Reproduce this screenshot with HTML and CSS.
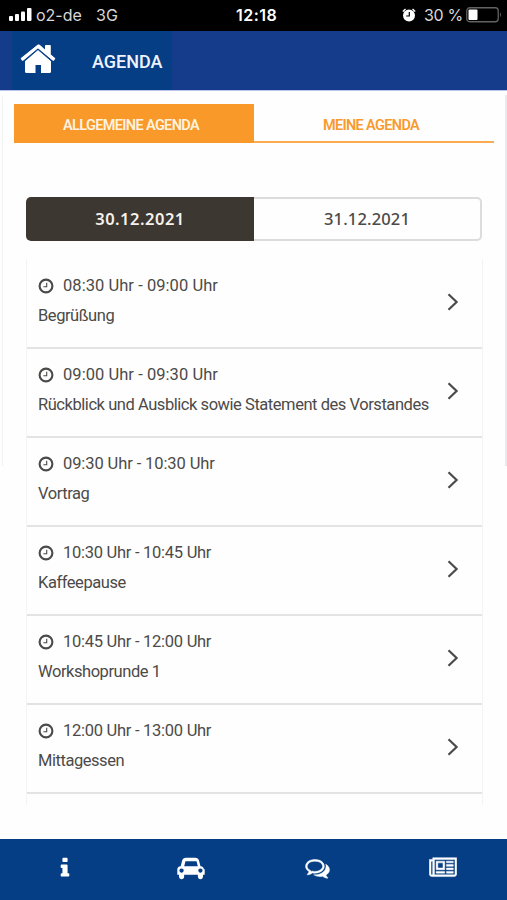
FILE: index.html
```html
<!DOCTYPE html>
<html lang="de">
<head>
    <meta charset="UTF-8">
    <meta name="viewport" content="width=device-width, initial-scale=1.0">
    <title>Agenda</title>
    <link rel="stylesheet" href="styles.css">
</head>
<body>
    <svg class="defs" width="0" height="0">
        <symbol id="clock" viewBox="0 0 16 16">
            <circle cx="8" cy="8" r="6.4" fill="none" stroke="currentColor" stroke-width="2.1"/>
            <path d="M8.7 4.8v4H5.4" fill="none" stroke="currentColor" stroke-width="1.1"/>
        </symbol>
        <symbol id="arrow" viewBox="0 0 12 18">
            <path d="M1.500 1.200L9.600 9l-8.100 7.800" fill="none" stroke="currentColor" stroke-width="2.2"/>
        </symbol>
    </svg>
    <div class="status">
        <svg class="signal" width="24" height="14" viewBox="0 0 24 14">
            <rect x="0" y="8" width="4" height="5" rx="1"/>
            <rect x="6" y="6" width="4" height="7" rx="1"/>
            <rect x="12" y="3.5" width="4" height="9.5" rx="1"/>
            <rect x="18" y="0" width="4.5" height="13" rx="1"/>
        </svg>
        <span class="carrier">o2-de</span>
        <span class="net">3G</span>
        <span class="clock">12:18</span>
        <svg class="alarm" width="14" height="14" viewBox="0 0 14 14">
            <circle cx="7" cy="7.5" r="6"/>
            <path d="M.8 3.4L3.5.9M13.2 3.4L10.5.9" stroke="#fff" stroke-width="1.4"/>
            <path d="M7.3 4v4H4.2" fill="none" stroke="#000" stroke-width="1.2"/>
        </svg>
        <span class="percent">30 %</span>
        <svg class="battery" width="37" height="16" viewBox="0 0 37 16">
            <rect x=".75" y=".75" width="31.5" height="14" rx="3" fill="none" stroke="#626262" stroke-width="1.3"/>
            <rect x="2.5" y="2.5" width="9" height="10.5" rx="1"/>
            <path d="M34 5.2q2 2.5 0 5z" fill="#626262"/>
        </svg>
    </div>
    <header>
        <div class="title">
            <svg class="home" width="36" height="30" viewBox="0 0 36 30">
                <path d="M18 5.8L31 17v10.5q0 1.5-1.5 1.5H21v-8h-5.5v8H6.5q-1.5 0-1.5-1.5V17z"/>
                <path d="M17.9.8q.9-.6 1.8 0L25 5.4V1.8q0-.8.8-.8H30q.8 0 .8.8v8.6l4.2 3.7q.6.6 0 1.2l-1.1 1.3q-.6.6-1.2 0L18 3.9 3.3 16.6q-.6.6-1.2 0L1 15.3q-.6-.6 0-1.2z"/>
                <path d="M2.500 15.200L18 2.400l15.500 12.800" fill="none" stroke="#fff" stroke-width="2.8"/>
                <path d="M4 17.500L18 5.600l14 11.900" fill="none" stroke="#063e85" stroke-width=".7"/>
            </svg>
            <h1>AGENDA</h1>
        </div>
    </header>
    <main>
        <div class="edge"></div>
        <nav class="tabs">
            <a class="active"><span>ALLGEMEINE AGENDA</span></a>
            <a><span>MEINE AGENDA</span></a>
        </nav>
        <div class="days">
            <button type="button" class="active">30.12.2021</button>
            <button type="button">31.12.2021</button>
        </div>
        <ul class="agenda">
            <li>
                <div>
                    <p class="time"><svg><use href="#clock"/></svg>08:30 Uhr - 09:00 Uhr</p>
                    <p>Begrüßung</p>
                </div>
                <svg class="arrow"><use href="#arrow"/></svg>
            </li>
            <li>
                <div>
                    <p class="time"><svg><use href="#clock"/></svg>09:00 Uhr - 09:30 Uhr</p>
                    <p>Rückblick und Ausblick sowie Statement des Vorstandes</p>
                </div>
                <svg class="arrow"><use href="#arrow"/></svg>
            </li>
            <li>
                <div>
                    <p class="time mid"><svg><use href="#clock"/></svg>09:30 Uhr - 10:30 Uhr</p>
                    <p>Vortrag</p>
                </div>
                <svg class="arrow"><use href="#arrow"/></svg>
            </li>
            <li>
                <div>
                    <p class="time narrow"><svg><use href="#clock"/></svg>10:30 Uhr - 10:45 Uhr</p>
                    <p>Kaffeepause</p>
                </div>
                <svg class="arrow"><use href="#arrow"/></svg>
            </li>
            <li>
                <div>
                    <p class="time narrow"><svg><use href="#clock"/></svg>10:45 Uhr - 12:00 Uhr</p>
                    <p>Workshoprunde 1</p>
                </div>
                <svg class="arrow"><use href="#arrow"/></svg>
            </li>
            <li>
                <div>
                    <p class="time narrow"><svg><use href="#clock"/></svg>12:00 Uhr - 13:00 Uhr</p>
                    <p>Mittagessen</p>
                </div>
                <svg class="arrow"><use href="#arrow"/></svg>
            </li>
        </ul>
    </main>
    <footer>
        <a><svg width="10" height="24" viewBox="0 0 640 1792"><path d="M640 1344v128q0 26-19 45t-45 19h-512q-26 0-45-19t-19-45v-128q0-26 19-45t45-19h64v-384h-64q-26 0-45-19t-19-45v-128q0-26 19-45t45-19h384q26 0 45 19t19 45v576h64q26 0 45 19t19 45zm-128-1152v192q0 26-19 45t-45 19h-256q-26 0-45-19t-19-45v-192q0-26 19-45t45-19h256q26 0 45 19t19 45z"/></svg></a>
        <a><svg width="28" height="24" viewBox="0 0 2048 1792"><path d="M480 1088q0-66-47-113t-113-47-113 47-47 113 47 113 113 47 113-47 47-113zm36-320h1016l-89-357q-2-8-14-17.5t-21-9.5h-768q-9 0-21 9.5t-14 17.5zm1372 320q0-66-47-113t-113-47-113 47-47 113 47 113 113 47 113-47 47-113zm160-96v384q0 14-9 23t-23 9h-96v128q0 80-56 136t-136 56-136-56-56-136v-128h-1024v128q0 80-56 136t-136 56-136-56-56-136v-128h-96q-14 0-23-9t-9-23v-384q0-93 65.5-158.5t158.5-65.5h28l105-419q23-94 104-157.5t179-63.5h704q98 0 179 63.5t104 157.5l105 419h28q93 0 158.5 65.5t65.5 158.5z"/></svg></a>
        <a><svg class="bold" width="25" height="24" viewBox="0 0 1792 1792"><path d="M704 384q-153 0-286 52t-211.5 141-78.5 191q0 82 53 158t149 132l97 56-35 84q34-20 62-39l44-31 53 10q78 14 153 14 153 0 286-52t211.5-141 78.5-191-78.5-191-211.5-141-286-52zm0-128q191 0 353.5 68.5t256.5 186.5 94 257-94 257-256.5 186.5-353.5 68.5q-86 0-176-16-124 88-278 128-36 9-86 16h-3q-11 0-20.5-8t-11.5-21q-1-3-1-6.5t.5-6.5 2-6l2.5-5 3.5-5.5 4-5 4.5-5 4-4.5q5-6 23-25t26-29.5 22.5-29 25-38.5 20.5-44q-124-72-195-177t-71-224q0-139 94-257t256.5-186.5 353.5-68.5zm822 1169q10 24 20.5 44t25 38.5 22.5 29 26 29.5 23 25q1 1 4 4.5t4.5 5 4 5 3.5 5.5l2.5 5 2 6 .5 6.5-1 6.5q-3 14-13 22t-22 7q-50-7-86-16-154-40-278-128-90 16-176 16-271 0-472-132 58 4 88 4 161 0 309-45t264-129q125-92 192-212t67-254q0-77-23-152 129 71 204 178t75 230q0 120-71 224.5t-195 176.5z"/></svg></a>
        <a><svg class="bold" width="28" height="24" viewBox="0 0 2048 1792"><path d="M1024 512h-384v384h384v-384zm128 640v128h-640v-128h640zm0-768v640h-640v-640h640zm640 768v128h-512v-128h512zm0-256v128h-512v-128h512zm0-256v128h-512v-128h512zm0-256v128h-512v-128h512zm-1536 960v-960h-128v960q0 26 19 45t45 19 45-19 19-45zm1664 0v-1088h-1536v1088q0 33-11 64h1483q26 0 45-19t19-45zm128-1216v1216q0 80-56 136t-136 56h-1664q-80 0-136-56t-56-136v-1088h256v-128h1792z"/></svg></a>
    </footer>
</body>
</html>
```
FILE: styles.css
```css
* {
  box-sizing: border-box;
}
body {
  display: flex;
  flex-direction: column;
  height: 900px;
  margin: 0;
  overflow: hidden;
  background: #fefefe;
  color: #4c4a48;
  font-family: Roboto, "Open Sans", sans-serif;
}
.defs {
  position: absolute;
}
.status {
  display: flex;
  align-items: center;
  height: 31px;
  flex: none;
  padding: 0 4px 1px 9px;
  background: #000;
  color: #d8d8d8;
  fill: #fff;
  font-family: Inter, sans-serif;
  font-size: 16px;
  white-space: nowrap;
}
.carrier {
  width: 60px;
  margin-left: 3px;
}
.net {
  width: 140px;
}
.clock {
  width: 166px;
  color: #fff;
  font-weight: 600;
  letter-spacing: 0.5px;
}
.percent {
  width: 42px;
  margin-left: 8px;
  letter-spacing: -0.3px;
}
.battery {
  flex: none;
}
header {
  height: 59px;
  flex: none;
  padding-left: 12px;
  background: #143c8b;
}
.title {
  display: flex;
  align-items: center;
  width: 160px;
  height: 59px;
  padding: 0 0 3px 8px;
  background: #063e85;
  fill: #fff;
}
.title h1 {
  margin: 4px 0 0 36px;
  color: #eef3ff;
  font-size: 18px;
  font-weight: 500;
}
main {
  position: relative;
  flex: 1;
  padding: 13px 13px 0 14px;
  border-top: 1px solid #bcc3ea;
}
.edge {
  position: absolute;
  top: 4px;
  right: 0;
  left: 2px;
  height: 371px;
  border-right: 2px solid #e9e9eb;
  border-left: 1px solid #f3f3f5;
  pointer-events: none;
}
.tabs {
  display: flex;
  height: 39px;
  border-bottom: 2px solid #fbab50;
  font-size: 14.5px;
  font-weight: 600;
  text-align: center;
}
.tabs a {
  width: 240px;
  height: 39px;
  padding-right: 6px;
  color: #f99a2e;
  line-height: 43px;
}
.tabs a.active {
  background: #f8992a;
  color: #fff3df;
}
.tabs span {
  letter-spacing: -0.65px;
}
.days {
  display: flex;
  height: 44px;
  margin: 54px 12px 0;
}
.days button {
  width: 228px;
  padding: 0;
  border: 2px solid #dcdcdc;
  border-left: 0;
  border-radius: 0 5px 5px 0;
  background: #fefefe;
  color: #4c4a48;
  font-family: "Noto Sans", sans-serif;
  font-size: 16.5px;
  font-weight: 500;
  line-height: 38px;
  letter-spacing: 0.15px;
}
.days .active {
  border: 0;
  border-radius: 5px 0 0 5px;
  background: #3c3731;
  color: #f5f1ec;
  font-weight: 600;
  letter-spacing: 0.5px;
}
.agenda {
  height: 546px;
  margin: 18px 11px 0 12px;
  padding: 0;
  border: solid #f4f4f4;
  border-width: 0 1px;
  list-style: none;
}
.agenda li {
  display: flex;
  justify-content: space-between;
  height: 89px;
  padding: 12px 23px 0 11px;
  border-bottom: 2px solid #e3e3e3;
}
.agenda li:first-child {
  height: 90px;
}
.agenda p {
  margin: 0;
  font-size: 16.5px;
  line-height: 29.5px;
  letter-spacing: -0.45px;
  white-space: nowrap;
}
.agenda .time {
  display: flex;
  align-items: center;
  letter-spacing: 0.05px;
}
.agenda .mid {
  letter-spacing: -0.1px;
}
.agenda .narrow {
  letter-spacing: -0.27px;
}
.time svg {
  width: 16px;
  height: 16px;
  margin-right: 9px;
}
.arrow {
  width: 12px;
  height: 18px;
  flex: none;
  margin-top: 22px;
}
.agenda li:not(:first-child) {
  padding-top: 11px;
}
footer {
  display: flex;
  height: 61px;
  flex: none;
  padding: 0 1px 4px 2px;
  background: #063e85;
  fill: #fff;
}
footer a {
  display: flex;
  align-items: center;
  justify-content: center;
  width: 126px;
}
footer .bold {
  stroke: #fff;
  stroke-width: 36;
}
```
